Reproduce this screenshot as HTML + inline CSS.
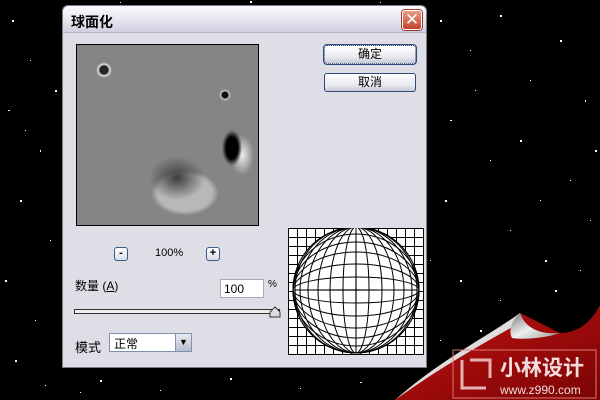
<!DOCTYPE html>
<html><head><meta charset="utf-8"><style>
*{margin:0;padding:0;box-sizing:border-box}
body{width:600px;height:400px;background:#000;position:relative;overflow:hidden;font-family:"Liberation Sans","Noto Sans CJK SC",sans-serif;font-size:12px}
.dlg{position:absolute;left:62px;top:5px;width:365px;height:363px;background:#dfdee6;border:1px solid #7c7b90;border-radius:6px 6px 0 0}
.title{height:27px;background:linear-gradient(#fafaff,#e8e8f0 50%,#cfcfdf);border-bottom:1px solid #b8b8cc;border-radius:6px 6px 0 0;font-weight:bold;font-size:14px;padding:6px 0 0 8px;color:#000}
.x{position:absolute;right:4px;top:4px;width:20px;height:20px;border-radius:3px;background:linear-gradient(#e89a86,#c4452a);border:1px solid #fff;box-shadow:0 0 0 1px #9b3b2c;color:#fff;font-size:17px;line-height:18px;text-align:center}
.prev{position:absolute;left:13px;top:38px;width:183px;height:182px;border:1px solid #000;background:radial-gradient(ellipse 28px 22px at 100px 133px,#3c3c3c,transparent),radial-gradient(ellipse 45px 30px at 108px 148px,#b8b8b8 60%,transparent 75%),radial-gradient(ellipse 10px 18px at 155px 103px,#000 60%,transparent),radial-gradient(circle 8px at 27px 25px,#222 50%,#ddd 70%,transparent),radial-gradient(ellipse 12px 20px at 165px 110px,#eee,transparent),radial-gradient(circle 6px at 148px 50px,#111 50%,#ccc 70%,transparent),#858585}
.btn{position:absolute;left:261px;width:92px;height:19px;border:1px solid #2c4a7a;border-radius:3px;background:linear-gradient(#fff,#e6e6ee 70%,#c8c8d8);text-align:center;font-size:12px;line-height:17px}
.sb{position:absolute;width:14px;height:14px;border:1px solid #3a5a8a;border-radius:3px;background:linear-gradient(#fff,#d8dce8);font-size:11px;line-height:11px;text-align:center;font-weight:bold}
.t{position:absolute;font-size:12px}
</style></head><body>
<svg width="600" height="400" style="position:absolute;left:0;top:0" fill="#fff">
<g>
<rect x="12" y="20" width="2" height="2"/><rect x="30" y="60" width="1" height="1"/><rect x="8" y="110" width="2" height="1"/><rect x="40" y="150" width="1" height="2"/><rect x="20" y="200" width="2" height="2"/><rect x="50" y="240" width="1" height="1"/><rect x="5" y="280" width="2" height="2"/><rect x="35" y="320" width="1" height="1"/><rect x="15" y="360" width="2" height="2"/><rect x="45" y="385" width="1" height="1"/><rect x="55" y="90" width="2" height="2"/><rect x="25" y="130" width="1" height="1"/><rect x="100" y="380" width="2" height="2"/><rect x="160" y="390" width="1" height="1"/><rect x="230" y="378" width="2" height="2"/><rect x="300" y="388" width="1" height="1"/><rect x="360" y="382" width="2" height="1"/><rect x="80" y="392" width="1" height="1"/><rect x="440" y="20" width="2" height="2"/><rect x="470" y="50" width="1" height="1"/><rect x="500" y="15" width="2" height="2"/><rect x="530" y="80" width="1" height="1"/><rect x="560" y="40" width="2" height="2"/><rect x="585" y="100" width="1" height="2"/><rect x="450" y="120" width="2" height="1"/><rect x="490" y="160" width="1" height="1"/><rect x="520" y="140" width="2" height="2"/><rect x="570" y="180" width="1" height="1"/><rect x="445" y="200" width="2" height="2"/><rect x="510" y="230" width="1" height="1"/><rect x="545" y="260" width="2" height="2"/><rect x="590" y="220" width="1" height="1"/><rect x="460" y="280" width="2" height="2"/><rect x="500" y="300" width="1" height="1"/><rect x="480" y="330" width="2" height="2"/><rect x="440" y="340" width="1" height="1"/><rect x="555" y="290" width="2" height="2"/><rect x="580" y="270" width="1" height="1"/><rect x="475" y="90" width="1" height="1"/><rect x="595" y="150" width="2" height="2"/><rect x="430" y="260" width="1" height="1"/><rect x="540" y="200" width="1" height="1"/><rect x="120" y="2" width="1" height="1"/><rect x="250" y="1" width="2" height="2"/><rect x="380" y="2" width="1" height="1"/>
</g>
<defs><linearGradient id="rg" x1="0" y1="0" x2="1" y2="1"><stop offset="0" stop-color="#c41212"/><stop offset="1" stop-color="#7a0404"/></linearGradient>
<linearGradient id="cg" x1="0" y1="0" x2="1" y2="1"><stop offset="0" stop-color="#777"/><stop offset="0.5" stop-color="#eee"/><stop offset="1" stop-color="#999"/></linearGradient></defs>
<path d="M600 305 C590 325 575 333 560 333 L520 313 C490 335 440 360 395 400 L600 400Z" fill="url(#rg)"/>
<path d="M520 313 C490 335 440 360 395 400 C445 364 490 340 514 326Z" fill="#ddd"/>
<path d="M520 313 C525 328 540 335 560 333 C545 338 525 340 512 338 C508 330 512 320 520 313Z" fill="url(#cg)"/>
<rect x="453" y="350" width="143" height="48" fill="none" stroke="#d77" stroke-width="1"/>
<text x="500" y="375" font-size="21" font-weight="bold" fill="#f2dcdc" font-family="Noto Sans CJK SC,sans-serif">小林设计</text>
<text x="500" y="394" font-size="12" fill="#f2dcdc" font-family="Liberation Sans,sans-serif">www.z990.com</text>
<path d="M462 360 L462 388 L486 388 M470 360 L490 360 L490 378" stroke="#e8b0b0" stroke-width="3" fill="none"/>
</svg>
<div class="dlg">
<div class="title">球面化</div>
<div class="x">✕</div>
<div class="prev"></div>
<div class="btn" style="top:39px;border-style:dotted;outline:1px solid #2c4a7a">确定</div>
<div class="btn" style="top:67px">取消</div>
<div class="sb" style="left:51px;top:241px">-</div>
<div class="t" style="left:92px;top:241px;font-size:11px">100%</div>
<div class="sb" style="left:143px;top:241px">+</div>
<div class="t" style="left:12px;top:271px">数量 (<u>A</u>)</div>
<div style="position:absolute;left:157px;top:273px;width:44px;height:19px;background:#fff;border:1px solid #a8a8b8;font-size:12px;padding:2px 3px">100</div>
<div class="t" style="left:205px;top:273px;font-size:10px">%</div>
<div style="position:absolute;left:11px;top:303px;width:206px;height:5px;border:1px solid #333;background:#eee"></div>
<svg style="position:absolute;left:206px;top:300px" width="12" height="12"><path d="M1 11V6L6 1L11 6V11Z" fill="#ddd" stroke="#333"/></svg>
<div class="t" style="left:12px;top:331px;font-size:13px">模式</div>
<div style="position:absolute;left:46px;top:327px;width:83px;height:19px;background:#fff;border:1px solid #8090b0;padding:1px 4px;font-size:12px">正常
<div style="position:absolute;right:0;top:0;width:16px;height:17px;background:linear-gradient(#e8eaf2,#b8bccc);border-left:1px solid #8090b0;font-size:9px;text-align:center;line-height:17px">▼</div></div>
</div>
<svg style="position:absolute;left:288px;top:228px" width="138" height="127" stroke="#000" stroke-width="1" fill="none">
<rect x="0.5" y="0.5" width="135" height="126" fill="#fff"/>
<path d="M9.5 0V127M18.5 0V127M27.5 0V127M36.5 0V127M45.5 0V127M54.5 0V127M63.5 0V127M72.5 0V127M81.5 0V127M90.5 0V127M99.5 0V127M108.5 0V127M117.5 0V127M126.5 0V127M0 9.5H136M0 18.5H136M0 27.5H136M0 36.5H136M0 45.5H136M0 54.5H136M0 63.5H136M0 72.5H136M0 81.5H136M0 90.5H136M0 99.5H136M0 108.5H136M0 117.5H136"/>
<circle cx="68" cy="62" r="63" fill="#fff"/>
<g>
<ellipse cx="68" cy="62" rx="0.1" ry="63"/>
<ellipse cx="68" cy="62" rx="13" ry="63"/><ellipse cx="68" cy="62" rx="26" ry="63"/><ellipse cx="68" cy="62" rx="38" ry="63"/><ellipse cx="68" cy="62" rx="48" ry="63"/><ellipse cx="68" cy="62" rx="56" ry="63"/><ellipse cx="68" cy="62" rx="61" ry="63"/>
<ellipse cx="68" cy="62" rx="63" ry="0.1"/>
<ellipse cx="68" cy="62" rx="63" ry="13"/><ellipse cx="68" cy="62" rx="63" ry="26"/><ellipse cx="68" cy="62" rx="63" ry="38"/><ellipse cx="68" cy="62" rx="63" ry="48"/><ellipse cx="68" cy="62" rx="63" ry="56"/>
</g>
<circle cx="68" cy="62" r="63"/>
</svg>
</body></html>
